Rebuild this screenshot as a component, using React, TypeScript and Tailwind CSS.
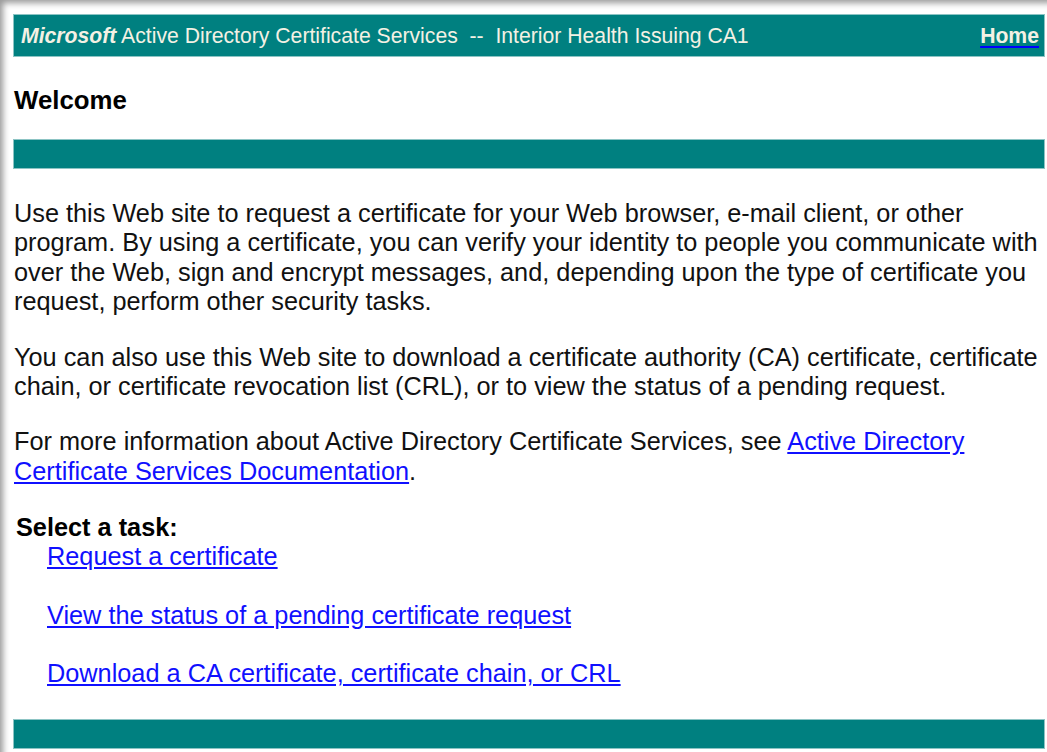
export default function App() {
  const font = { fontFamily: '"Liberation Sans", Arial, sans-serif' };
  return (
    <div
      className="w-[1047px] h-[752px] overflow-hidden bg-white shadow-[inset_5px_5px_6px_-2px_#9a9a9a] text-black"
      style={font}
    >
      <div className="pl-[13px] pt-[14px] pr-[2px]">
        {/* Title bar */}
        <div className="h-[43px] bg-[#008080] border border-[#8cc4c4] flex items-center justify-between pl-[7px] pr-[5px] text-[21.2px] text-[#f4f1e4] whitespace-nowrap">
          <div>
            <span className="font-bold italic">Microsoft</span> Active Directory Certificate Services&nbsp;&nbsp;--&nbsp;&nbsp;Interior Health Issuing CA1
          </div>
          <a href="#" className="font-bold underline decoration-[#0000ff] decoration-2 underline-offset-[3px] text-[#f4f1e4]">
            Home
          </a>
        </div>

        <div className="mt-[29px] font-bold text-[25.8px] leading-[28px] pl-[1px]">Welcome</div>

        <div className="mt-[25px] h-[30px] bg-[#008080] border border-[#8cc4c4]" />

        <div className="text-[25.3px] leading-[29.4px] text-[#111111] pl-[1px] whitespace-nowrap">
          <p className="mt-[30px]">
            Use this Web site to request a certificate for your Web browser, e-mail client, or other
            <br />
            program. By using a certificate, you can verify your identity to people you communicate with
            <br />
            over the Web, sign and encrypt messages, and, depending upon the type of certificate you
            <br />
            request, perform other security tasks.
          </p>
          <p className="mt-[26px]">
            You can also use this Web site to download a certificate authority (CA) certificate, certificate
            <br />
            chain, or certificate revocation list (CRL), or to view the status of a pending request.
          </p>
          <p className="mt-[26px]">
            For more information about Active Directory Certificate Services, see{" "}
            <a href="#" className="text-[#1010ff] underline">Active Directory</a>
            <br />
            <a href="#" className="text-[#1010ff] underline">Certificate Services Documentation</a>.
          </p>
        </div>

        <div className="mt-[27px] pl-[3px] font-bold text-[25.3px] leading-[29px]">Select a task:</div>
        <div className="pl-[34px] text-[25.3px] leading-[29.4px] flex flex-col gap-[29px] whitespace-nowrap">
          <a href="#" className="text-[#1010ff] underline w-fit">Request a certificate</a>
          <a href="#" className="text-[#1010ff] underline w-fit">View the status of a pending certificate request</a>
          <a href="#" className="text-[#1010ff] underline w-fit">Download a CA certificate, certificate chain, or CRL</a>
        </div>

        <div className="mt-[31px] h-[30px] bg-[#008080] border border-[#8cc4c4]" />
      </div>
    </div>
  );
}
